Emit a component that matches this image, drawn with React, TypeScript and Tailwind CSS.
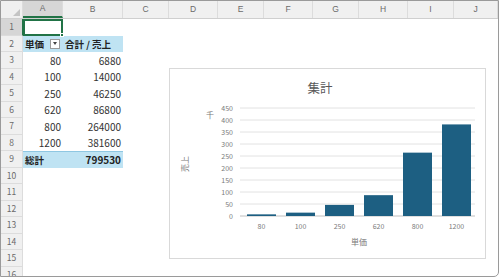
import React from "react";

const cols = [
  { name: "A", w: "w-[40px]" },
  { name: "B", w: "w-[60px]" },
  { name: "C", w: "w-[46px]" },
  { name: "D", w: "w-[49px]" },
  { name: "E", w: "w-[46px]" },
  { name: "F", w: "w-[49px]" },
  { name: "G", w: "w-[46px]" },
  { name: "H", w: "w-[49px]" },
  { name: "I", w: "w-[46px]" },
  { name: "J", w: "flex-1" },
];

const data = [
  { price: 80, sales: 6880 },
  { price: 100, sales: 14000 },
  { price: 250, sales: 46250 },
  { price: 620, sales: 86800 },
  { price: 800, sales: 264000 },
  { price: 1200, sales: 381600 },
];

const font = { fontFamily: '"Noto Sans CJK JP", "Noto Sans", sans-serif' };

function RowHead({ n, active }: { n: number; active?: boolean }) {
  return (
    <div
      className={`w-[22px] shrink-0 h-full flex items-center justify-center text-[8.5px] text-[#6a6a6a] border-b border-r border-[#dcdcdc] ${
        active ? "bg-[#d6d6d6] border-r-[#217346]" : "bg-[#f0f0f0]"
      }`}
    >
      {n}
    </div>
  );
}

function Chart() {
  const ticks = [450, 400, 350, 300, 250, 200, 150, 100, 50, 0];
  const y0 = 147;
  const scale = 0.24;
  return (
    <div className="absolute left-[168px] top-[67px] w-[317px] h-[191px] bg-white border border-[#d9d9d9]">
      <svg width="317" height="191" viewBox="0 0 317 191" style={font}>
        <text x="150" y="24" textAnchor="middle" fontSize="12.5" fill="#595959">
          集計
        </text>
        {ticks.map((t) => {
          const y = y0 - t * scale;
          return (
            <g key={t}>
              <line x1="70" x2="305" y1={y} y2={y} stroke={t === 0 ? "#bfbfbf" : "#e2e2e2"} strokeWidth="1" />
              <text x="63" y={y + 2.5} textAnchor="end" fontSize="7" fill="#7a7a7a">
                {t}
              </text>
            </g>
          );
        })}
        {data.map((d, i) => {
          const cx = 91.5 + i * 39;
          const h = (d.sales / 1000) * scale;
          return (
            <g key={d.price}>
              <rect x={cx - 14.5} y={y0 - h} width="29" height={h} fill="#1d5f82" />
              <text x={cx} y="160" textAnchor="middle" fontSize="7" fill="#7a7a7a">
                {d.price}
              </text>
            </g>
          );
        })}
        <text x="40" y="49" textAnchor="middle" fontSize="8" fill="#7a7a7a">
          千
        </text>
        <text x="0" y="0" textAnchor="middle" fontSize="8" fill="#7a7a7a" transform="translate(18 95) rotate(-90)">
          売上
        </text>
        <text x="189" y="176" textAnchor="middle" fontSize="8" fill="#7a7a7a">
          単価
        </text>
      </svg>
    </div>
  );
}

export default function App() {
  return (
    <div className="w-[500px] h-[278px] bg-white">
      <div
        className="relative w-[499px] h-[277px] border border-[#9a9a9a] rounded-br-[5px] overflow-hidden bg-white"
        style={font}
      >
        {/* column headers */}
        <div className="flex h-[18px] bg-[#f0f0f0] border-b border-[#cfcfcf]">
          <div className="w-[22px] shrink-0 relative border-r border-[#dcdcdc]">
            <div className="absolute right-[2px] bottom-[2px] w-0 h-0 border-l-[7px] border-l-transparent border-b-[7px] border-b-[#c4c4c4]" />
          </div>
          {cols.map((c) => (
            <div
              key={c.name}
              className={`${c.w} shrink-0 flex items-center justify-center text-[8.5px] text-[#6a6a6a] border-r border-[#dcdcdc] ${
                c.name === "A" ? "bg-[#d6d6d6] border-b-2 border-b-[#217346]" : ""
              }`}
              style={{ fontFamily: '"Liberation Sans", sans-serif' }}
            >
              {c.name}
            </div>
          ))}
        </div>

        {/* row 1 */}
        <div className="flex h-[16.5px]">
          <RowHead n={1} active />
          <div className="relative w-[40px] h-full border-2 border-[#217346]">
            <div className="absolute -right-[3px] -bottom-[3px] w-[4px] h-[4px] bg-[#217346] border border-white" />
          </div>
        </div>

        {/* row 2 pivot header */}
        <div className="flex h-[16.5px]">
          <RowHead n={2} />
          <div className="w-[40px] h-full bg-[#bfe3f3] flex items-center pl-[2px] text-[9.5px] font-bold text-[#222]">
            <span>単価</span>
            <span className="ml-auto mr-[3px] w-[10px] h-[10px] bg-white border border-[#9a9a9a] flex items-center justify-center">
              <span className="w-0 h-0 border-l-[2.5px] border-r-[2.5px] border-t-[3px] border-l-transparent border-r-transparent border-t-[#444]" />
            </span>
          </div>
          <div className="w-[60px] h-full bg-[#bfe3f3] flex items-center pl-[2px] text-[9.5px] font-bold text-[#222]">
            合計 / 売上
          </div>
        </div>

        {/* data rows */}
        {data.map((d, i) => (
          <div key={d.price} className="flex h-[16.5px]">
            <RowHead n={i + 3} />
            <div className="w-[40px] h-full flex items-center justify-end pr-[2px] text-[10px] text-[#333]">
              {d.price}
            </div>
            <div className="w-[60px] h-full flex items-center justify-end pr-[2px] text-[10px] text-[#333]">
              {d.sales}
            </div>
          </div>
        ))}

        {/* total row */}
        <div className="flex h-[16.5px]">
          <RowHead n={9} />
          <div className="w-[100px] h-full bg-[#bfe3f3] border-t border-[#8fc7e2] flex items-center px-[2px] text-[9.5px] font-bold text-[#222]">
            <span>総計</span>
            <span className="ml-auto text-[10px]">799530</span>
          </div>
        </div>

        {[10, 11, 12, 13, 14, 15, 16].map((n) => (
          <div key={n} className="flex h-[16.5px]">
            <RowHead n={n} />
          </div>
        ))}

        <Chart />
      </div>
    </div>
  );
}
